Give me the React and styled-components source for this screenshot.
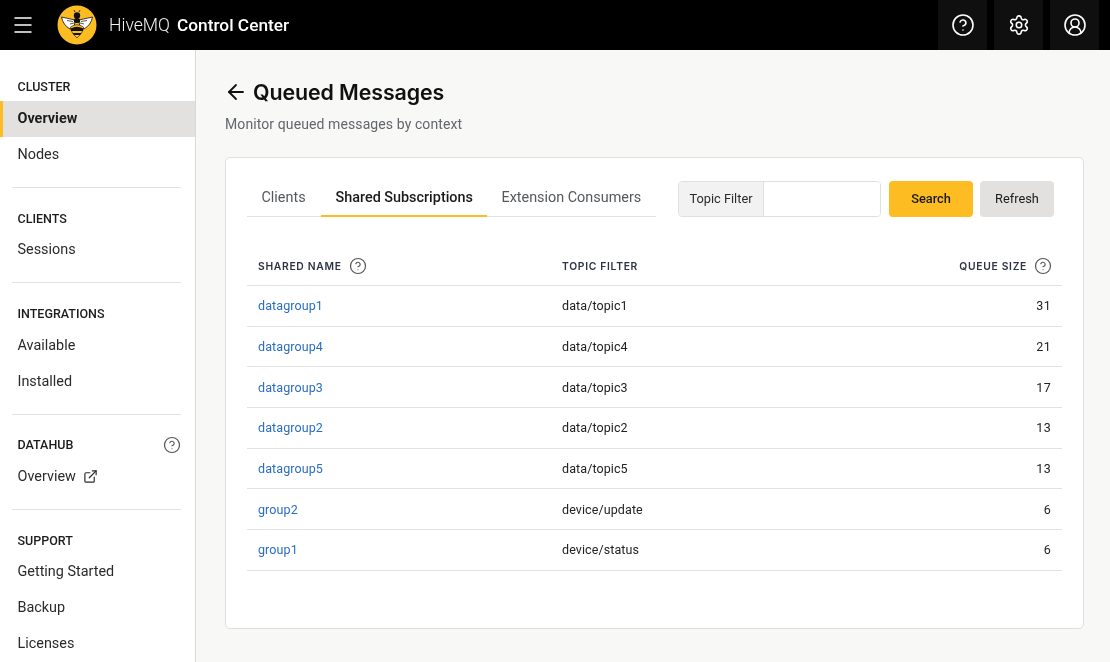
import React from "react";
import styled, { createGlobalStyle } from "styled-components";
import { ArrowLeft, CircleHelp, Settings, CircleUserRound, ExternalLink, Menu } from "lucide-react";

const Global = createGlobalStyle`
  html, body { margin: 0; padding: 0; height: 100%; overflow: hidden; }
  body { font-family: Roboto, "Liberation Sans", sans-serif; background: #f8f8f7; color: #1a1a1a; }
  * { box-sizing: border-box; }
`;
const Shell = styled.div`display: flex; flex-direction: column; height: 662px; width: 1110px; overflow: hidden; will-change: transform;`;
const TopBar = styled.header`
  height: 50px; flex: none; background: #000; color: #fff; display: flex; align-items: center; padding-left: 11px;
`;
const MenuButton = styled.span`display: flex; width: 24px; color: #fff;`;
const Logo = styled.svg`width: 40px; height: 40px; margin-left: 22px; flex: none;`;
const Brand = styled.div`font-size: 17.6px; margin-left: 12px; color: #f2f2f2; font-weight: 300; white-space: nowrap;`;
const BrandStrong = styled.span`font-size: 17.3px; font-weight: 500; color: #fff; margin-left: 7px;`;
const TopActions = styled.div`margin-left: auto; display: flex; gap: 7px; padding-right: 11px;`;
const TopAction = styled.div`
  width: 49px; height: 50px; background: #0f0f10; display: flex; align-items: center; justify-content: center; color: #fff;
`;
const Body = styled.div`display: flex; flex: 1; min-height: 0;`;
const Sidebar = styled.nav`
  width: 196px; flex: none; background: #fff; border-right: 1px solid #d9d9d6; padding-top: 27px; overflow: hidden;
`;
const Section = styled.section`display: flow-root; margin: 0; padding-bottom: 15px;`;
const SectionTitle = styled.div`
  display: flex; align-items: center; justify-content: space-between; height: 20px; padding: 0 14px 0 17.5px;
  margin-top: ${p => p.$mt || 0}px; margin-bottom: ${p => p.$mb ?? 3}px;
  font-size: 12.5px; font-weight: 500; color: #1c1c1c; line-height: 20px;
`;
const NavItem = styled.div`
  height: ${p => p.$h || 36}px; display: flex; align-items: center; gap: 7px; font-size: 14.4px; padding-left: ${p => (p.$active ? "14.5px" : "17.5px")};
  padding-bottom: ${p => p.$nudge || 0}px;
  color: ${p => (p.$active ? "#1c1c1c" : "#2b2b2b")}; font-weight: ${p => (p.$active ? 700 : 400)};
  background: ${p => (p.$active ? "#e2e1df" : "transparent")};
  border-left: ${p => (p.$active ? "3px solid #fdbc22" : "none")};
`;
const Divider = styled.hr`border: 0; border-top: 1px solid #e2e2e0; margin: 0 14px 20px 12px;`;
const Main = styled.main`flex: 1; padding: 26px 26px 0 29px; min-width: 0;`;
const TitleRow = styled.div`display: flex; align-items: center; gap: 5px; height: 32px; margin-left: -1px;`;
const Title = styled.h1`margin: 0; font-family: Inter, sans-serif; font-size: 21.4px; font-weight: 600; color: #111; letter-spacing: -0.1px;`;
const Subtitle = styled.p`margin: 8px 0 0 0; font-size: 14px; color: #63666b; line-height: 16px; letter-spacing: .1px;`;
const Card = styled.div`
  margin: 25px 0 0 0; height: 472px; background: #fff; border: 1px solid #dfdfdd; border-radius: 5px; padding: 23px 21px 0;
`;
const Toolbar = styled.div`display: flex; align-items: flex-start; height: 36px;`;
const Tabs = styled.div`display: flex; width: 409px; height: 36px; border-bottom: 1px solid #e2e2e2; flex: none;`;
const Tab = styled.div`
  height: 36px; padding: 0 0 ${p => (p.$active ? 1 : 3)}px 14.5px; font-size: 14.4px; display: flex; align-items: center; white-space: nowrap;
  font-weight: ${p => (p.$active ? 500 : 400)}; color: ${p => (p.$active ? "#1a1a1a" : "#55585c")};
  border-bottom: ${p => (p.$active ? "2px solid #fdbc22" : "none")};
  width: ${p => p.$w}px; flex: none;
`;
const FilterGroup = styled.div`
  display: flex; margin-left: 22px; width: 203px; height: 36px; border: 1px solid #e0e0e0; border-radius: 4px; overflow: hidden;
`;
const FilterLabel = styled.div`
  width: 85px; background: #f2f2f2; border-right: 1px solid #e0e0e0; padding-bottom: 1px; font-size: 12.8px; display: flex; align-items: center; justify-content: center; color: #2b2b2b;
`;
const FilterInput = styled.input`flex: 1; min-width: 0; border: 0; outline: 0; background: #fff;`;
const Button = styled.button`
  height: 36px; border: 0; border-radius: 4px; font-family: inherit; font-size: 12.8px; font-weight: ${p => (p.$primary ? 500 : 400)}; color: #1a1a1a;
  background: ${p => (p.$primary ? "#fdbc22" : "#e2e1df")}; width: ${p => p.$w}px; margin-left: ${p => p.$ml}px; padding: 0 0 2px;
`;
const Table = styled.div`margin-top: 28px; width: 815px;`;
const Row = styled.div`
  display: grid; grid-template-columns: 304px 1fr 120px; align-items: center; padding: ${p => (p.$head ? "1px" : "0")} 11px 0;
  height: ${p => (p.$head ? "41px" : "40.7px")}; border-bottom: 1px solid #e2e2e2;
  font-size: 12.5px; color: #222;
`;
const HeadCell = styled.div`
  display: flex; align-items: center; gap: 7px; justify-content: ${p => (p.$end ? "flex-end" : "flex-start")};
  font-family: Inter, sans-serif; font-size: 10.3px; font-weight: 600; letter-spacing: .7px; color: #2d3345; white-space: nowrap;
  margin-right: ${p => (p.$end ? "-1px" : "0")};
`;
const GroupLink = styled.a`color: #2a6dc4; font-size: 12.5px; text-decoration: none; letter-spacing: .1px;`;
const Topic = styled.div`letter-spacing: .1px;`;
const Size = styled.div`text-align: right; font-size: 12.5px; letter-spacing: .3px;`;

const rows = [
  ["datagroup1", "data/topic1", 31],
  ["datagroup4", "data/topic4", 21],
  ["datagroup3", "data/topic3", 17],
  ["datagroup2", "data/topic2", 13],
  ["datagroup5", "data/topic5", 13],
  ["group2", "device/update", 6],
  ["group1", "device/status", 6],
];

const BeeLogo = () => (
  <Logo viewBox="0 0 40 40">
    <circle cx="20" cy="20" r="19.5" fill="#fdbc22" />
    <path d="M18 15 L4.5 12 Q6 20 13 24 L17.5 20Z" fill="#fff" stroke="#111" strokeWidth=".8" />
    <path d="M22 15 L35.5 12 Q34 20 27 24 L22.5 20Z" fill="#fff" stroke="#111" strokeWidth=".8" />
    <path d="M13 19 L17 18 M10 15.5 L16 16.5 M27 19 L23 18 M30 15.5 L24 16.5" stroke="#111" strokeWidth=".7" />
    <circle cx="20" cy="10.5" r="3.2" fill="#111" />
    <path d="M18 7 L17 5 M22 7 L23 5" stroke="#111" strokeWidth=".8" />
    <ellipse cx="20" cy="15.5" rx="3.2" ry="2.6" fill="#111" />
    <path d="M13.5 22 Q20 17.5 26.5 22 Q26.5 27 20 33 Q13.5 27 13.5 22Z" fill="#fdbc22" stroke="#111" strokeWidth=".6" />
    <path d="M13.7 23.5 Q20 20 26.3 23.5 L26 26 H14Z M15.5 28 H24.5 L23 30 H17Z" fill="#111" />
  </Logo>
);

export default function App() {
  return (
    <Shell>
      <Global />
      <TopBar>
        <MenuButton><Menu size={24} strokeWidth={1.5} /></MenuButton>
        <BeeLogo />
        <Brand>HiveMQ<BrandStrong>Control Center</BrandStrong></Brand>
        <TopActions>
          <TopAction><CircleHelp size={24} strokeWidth={1.6} /></TopAction>
          <TopAction><Settings size={22} strokeWidth={1.7} /></TopAction>
          <TopAction><CircleUserRound size={24} strokeWidth={1.6} /></TopAction>
        </TopActions>
      </TopBar>
      <Body>
        <Sidebar>
          <Section>
            <SectionTitle $mb={4}>CLUSTER</SectionTitle>
            <NavItem $active $nudge={1}>Overview</NavItem>
            <NavItem $h={35}>Nodes</NavItem>
          </Section>
          <Divider />
          <Section>
            <SectionTitle $mt={1} $mb={2}>CLIENTS</SectionTitle>
            <NavItem>Sessions</NavItem>
          </Section>
          <Divider />
          <Section>
            <SectionTitle $mt={1} $mb={3}>INTEGRATIONS</SectionTitle>
            <NavItem>Available</NavItem>
            <NavItem>Installed</NavItem>
          </Section>
          <Divider />
          <Section>
            <SectionTitle>DATAHUB<CircleHelp size={18} strokeWidth={1.6} color="#555" /></SectionTitle>
            <NavItem>Overview <ExternalLink size={15} strokeWidth={1.9} /></NavItem>
          </Section>
          <Divider />
          <Section>
            <SectionTitle $mt={1} $mb={2}>SUPPORT</SectionTitle>
            <NavItem>Getting Started</NavItem>
            <NavItem>Backup</NavItem>
            <NavItem>Licenses</NavItem>
          </Section>
        </Sidebar>
        <Main>
          <TitleRow>
            <ArrowLeft size={24} strokeWidth={1.8} color="#111" />
            <Title>Queued Messages</Title>
          </TitleRow>
          <Subtitle>Monitor queued messages by context</Subtitle>
          <Card>
            <Toolbar>
              <Tabs>
                <Tab $w={74}>Clients</Tab>
                <Tab $w={166} $active>Shared Subscriptions</Tab>
                <Tab $w={169}>Extension Consumers</Tab>
              </Tabs>
              <FilterGroup>
                <FilterLabel>Topic Filter</FilterLabel>
                <FilterInput />
              </FilterGroup>
              <Button $primary $w={84} $ml={8}>Search</Button>
              <Button $w={74} $ml={7}>Refresh</Button>
            </Toolbar>
            <Table>
              <Row $head>
                <HeadCell>SHARED NAME <CircleHelp size={18} strokeWidth={1.6} color="#555" /></HeadCell>
                <HeadCell>TOPIC FILTER</HeadCell>
                <HeadCell $end>QUEUE SIZE <CircleHelp size={18} strokeWidth={1.6} color="#555" /></HeadCell>
              </Row>
              {rows.map(([n, t, s]) => (
                <Row key={n}>
                  <GroupLink href="#">{n}</GroupLink>
                  <Topic>{t}</Topic>
                  <Size>{s}</Size>
                </Row>
              ))}
            </Table>
          </Card>
        </Main>
      </Body>
    </Shell>
  );
}
